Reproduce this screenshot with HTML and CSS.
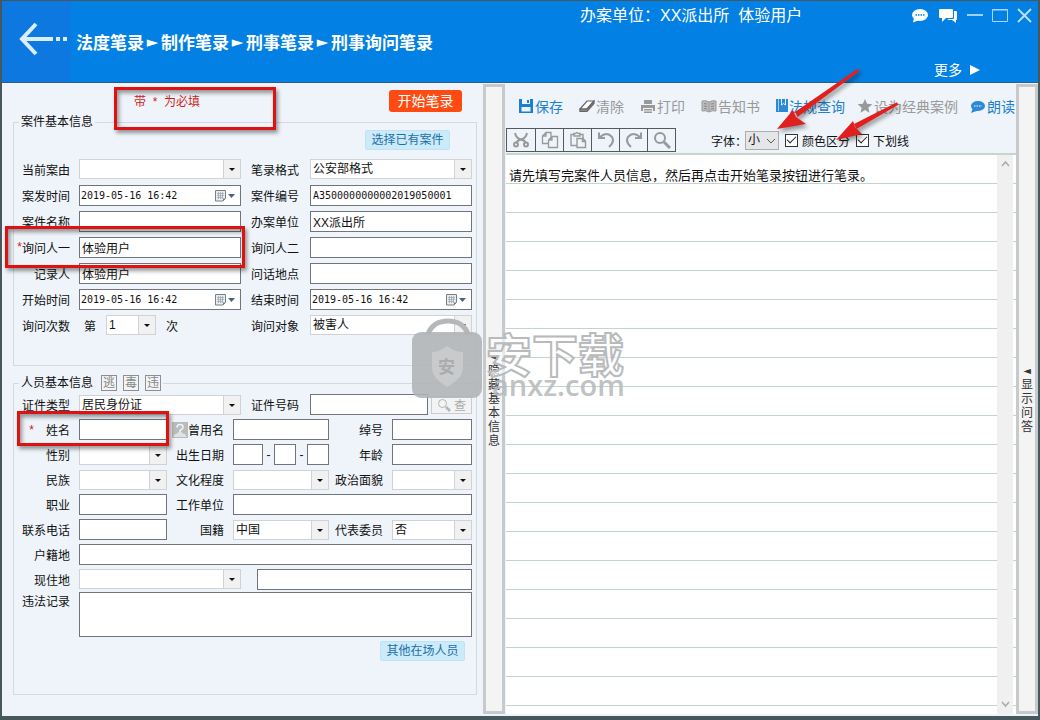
FILE: index.html
```
<!DOCTYPE html>
<html lang="zh-CN">
<head>
<meta charset="utf-8">
<title>刑事询问笔录</title>
<link rel="stylesheet" href="styles.css">
</head>
<body>
<svg class="defs" aria-hidden="true">
  <symbol id="calendar" viewBox="0 0 22 14">
    <path d="M1.500 1.500h10v8l-2.500 2.500H1.500z" fill="#e8ecef" stroke="#777f86"/>
    <path d="M3 4.500h7M3 6.500h7M3 8.500h6M4.500 3v7M6.500 3v7M8.500 3v7" stroke="#9aa5ad" stroke-width=".7"/>
    <path d="M11.500 9.500h-2.500v2.500z" fill="#777f86"/>
    <path d="M14 5h7l-3.500 4z" fill="#4e6579"/>
  </symbol>
</svg>
<div class="window">
  <header class="header">
    <button class="back" type="button" aria-label="返回">
      <svg width="50" height="34" viewBox="0 0 50 34" fill="none" stroke="#d9efff"><path d="M17 2 3 17l14 15" stroke-width="4"/><path d="M4 17h30M37 17h4M44 17h4" stroke-width="4"/></svg>
    </button>
    <nav class="crumbs"><span>法度笔录</span><i>►</i><span>制作笔录</span><i>►</i><span>刑事笔录</span><i>►</i><span>刑事询问笔录</span></nav>
    <div class="header-side">
      <div class="header-top">
        <span class="user">办案单位：XX派出所&nbsp; 体验用户</span>
        <div class="win-buttons">
          <button type="button" aria-label="消息"><svg width="18" height="16" viewBox="0 0 18 16"><ellipse cx="9" cy="7" rx="8" ry="6" fill="#fff"/><path d="M3 10 2 14.500 8 12z" fill="#fff"/><path d="M4.500 7h9" stroke="#0280e3" stroke-width="1.500" stroke-dasharray="1.500 1"/></svg></button>
          <button type="button" aria-label="会话"><svg width="20" height="16" viewBox="0 0 20 16" fill="#fff"><path d="M2 1h12q1 0 1 1v7q0 1-1 1H8l-4 4v-4H2q-1 0-1-1V2q0-1 1-1z"/><path d="M16 3h2q1 0 1 1v7q0 1-1 1v3l-4-3H9l2-1h4q1 0 1-1z"/></svg></button>
          <button type="button" aria-label="最小化"><svg width="16" height="16"><path d="M0 7h16" stroke="#9fd2fb" stroke-width="2"/></svg></button>
          <button type="button" aria-label="最大化"><svg width="16" height="16" fill="none" stroke="#a9d7fb"><path d="M.5 1.500h15v12H.5zM0 2h16"/></svg></button>
          <button type="button" aria-label="关闭"><svg width="15" height="16"><path d="m1 1 13 13M14 1 1 14" stroke="#b9dffc" stroke-width="2"/></svg></button>
        </div>
      </div>
      <button class="more" type="button">更多 <svg width="10" height="10"><path d="M0 0v10l10-5z" fill="#fff"/></svg></button>
    </div>
  </header>

  <main class="main">
    <form class="info">
      <div class="info-top">
        <span class="required-note">带&nbsp; *&nbsp; 为必填</span>
        <button class="start" type="button">开始笔录</button>
      </div>

      <fieldset class="group case">
        <legend>案件基本信息</legend>
        <div class="actions"><button class="soft" type="button">选择已有案件</button></div>
        <div class="row two">
          <label for="cause">当前案由</label>
          <span class="select"><select id="cause"><option></option></select></span>
          <label for="format">笔录格式</label>
          <span class="select"><select id="format"><option>公安部格式</option></select></span>
        </div>
        <div class="row two">
          <label for="ctime">案发时间</label>
          <span class="date"><input id="ctime" value="2019-05-16 16:42"><svg><use href="#calendar"/></svg></span>
          <label for="cno">案件编号</label>
          <input class="code" id="cno" value="A3500000000002019050001">
        </div>
        <div class="row two">
          <label for="cname">案件名称</label><input id="cname">
          <label for="unit">办案单位</label><input id="unit" value="XX派出所">
        </div>
        <div class="row two">
          <label for="asker1"><b>*</b>询问人一</label><input id="asker1" value="体验用户">
          <label for="asker2">询问人二</label><input id="asker2">
        </div>
        <div class="row two">
          <label for="recorder">记录人</label><input id="recorder" value="体验用户">
          <label for="place">问话地点</label><input id="place">
        </div>
        <div class="row two">
          <label for="begin">开始时间</label>
          <span class="date"><input id="begin" value="2019-05-16 16:42"><svg><use href="#calendar"/></svg></span>
          <label for="end">结束时间</label>
          <span class="date"><input id="end" value="2019-05-16 16:42"><svg><use href="#calendar"/></svg></span>
        </div>
        <div class="row two">
          <label for="times">询问次数</label>
          <span class="times">第<span class="select"><select id="times"><option>1</option></select></span>次</span>
          <label for="target">询问对象</label>
          <span class="select"><select id="target"><option>被害人</option></select></span>
        </div>
      </fieldset>

      <fieldset class="group person">
        <legend><span>人员基本信息</span><button class="tag" type="button">逃</button><button class="tag" type="button">毒</button><button class="tag" type="button">违</button></legend>
        <div class="row two">
          <label for="idtype">证件类型</label>
          <span class="select"><select id="idtype"><option>居民身份证</option></select></span>
          <label for="idno">证件号码</label>
          <span class="idno"><input id="idno"><button class="lookup" type="button"><svg width="14" height="14" fill="none" stroke="#b4b4b4"><circle cx="5.500" cy="5.500" r="4"/><path d="m9 9 4 4" stroke-width="2.500"/></svg>查</button></span>
        </div>
        <div class="row three">
          <label for="name"><b class="star">*</b>姓名</label><input id="name">
          <label for="alias"><svg width="16" height="16"><path d="M0 0h16v16H0z" fill="#b9bcbe"/><path d="M1.500 15q0-3 3.500-3.500l1.500-1.500h3l1.500 1.500q3.500.5 3.500 3.500z" fill="#dfe1e2"/><path d="M5 5.500Q5 2.500 8 2.500t3 2.500q0 2-3 3.500v1.500" fill="none" stroke="#f4f4f4" stroke-width="1.500"/></svg>曾用名</label><input id="alias">
          <label for="nick">绰号</label><input id="nick">
        </div>
        <div class="row three">
          <label for="sex">性别</label><span class="select"><select id="sex"><option></option></select></span>
          <label for="year">出生日期</label>
          <span class="birth"><input id="year">-<input aria-label="月">-<input aria-label="日"></span>
          <label for="age">年龄</label><input id="age">
        </div>
        <div class="row three">
          <label for="nation">民族</label><span class="select"><select id="nation"><option></option></select></span>
          <label for="edu">文化程度</label><span class="select"><select id="edu"><option></option></select></span>
          <label for="party">政治面貌</label><span class="select"><select id="party"><option></option></select></span>
        </div>
        <div class="row three">
          <label for="job">职业</label><input id="job">
          <label for="work">工作单位</label><input class="rest" id="work">
        </div>
        <div class="row three">
          <label for="phone">联系电话</label><input id="phone">
          <label for="country">国籍</label><span class="select"><select id="country"><option>中国</option></select></span>
          <label for="deputy">代表委员</label><span class="select"><select id="deputy"><option>否</option></select></span>
        </div>
        <div class="row one"><label for="home">户籍地</label><input id="home"></div>
        <div class="row one">
          <label for="area">现住地</label>
          <span class="address"><span class="select"><select id="area"><option></option></select></span><input aria-label="详细地址"></span>
        </div>
        <div class="row one tall"><label for="record">违法记录</label><textarea id="record"></textarea></div>
        <div class="actions"><button class="soft" type="button">其他在场人员</button></div>
      </fieldset>
    </form>

    <button class="splitter" type="button"><i>◄</i><span>隐藏基本信息</span></button>

    <section class="notes">
      <div class="toolbar">
        <button class="on" type="button"><svg width="16" height="16"><path d="M1 1h14v14H1z" fill="#187fd2"/><path d="M4 1h8v5H4zM3.500 9h9v4.500h-9z" fill="#eef4fa"/><path d="M9 2h2v3H9z" fill="#187fd2"/></svg>保存</button>
        <button type="button"><svg width="16" height="16" fill="#fff" stroke="#666" stroke-width="1.200"><path d="M1 11 8 3h7l-7 8z"/><path d="M1 11v2.500h7l7-8V3l-7 8z" fill="#888"/></svg>清除</button>
        <button type="button"><svg width="16" height="16" fill="#999"><path d="M4 2h8v4H4zM1 7h14v6h-2v-3H3v3H1z"/><path d="M4 11h8v1.500H4zM4 13.500h8V15H4z"/></svg>打印</button>
        <button type="button"><svg width="16" height="16" fill="#bbb" stroke="#999"><path d="M1 3q4-1 7 1 3-2 7-1v10q-4-1-7 1-3-2-7-1zM8 4v10"/><path d="M3 5.500l3 .5M3 8l3 .5M3 10.500l3 .5M10 6l3-.5M10 8.500l3-.5M10 11l3-.5" stroke="#888"/></svg>告知书</button>
        <div class="tools-end">
          <button class="on" type="button"><svg width="12" height="16"><path d="M0 1h12v13H0z" fill="#2c89d6"/><path d="M2.500 1v12" stroke="#9fcdf2"/><path d="M5.500 1v6l2-1.500L9.500 7V1" fill="none" stroke="#e4f1fc"/></svg>法规查询</button>
          <button type="button"><svg width="16" height="16" fill="#999"><path d="m8 1 2.100 4.800 5.200.5-4 3.400 1.200 5.100L8 12.100l-4.500 2.700 1.200-5.100-4-3.400 5.200-.5z"/></svg>设为经典案例</button>
          <button class="on" type="button"><svg width="16" height="16"><ellipse cx="8" cy="8" rx="7" ry="5" fill="#2c89d6"/><path d="M3 10 1 15l7-2.500z" fill="#2c89d6"/><path d="M4 8h8" stroke="#fff" stroke-dasharray="1.500 1"/></svg>朗读</button>
        </div>
      </div>
      <div class="format">
        <div class="edit">
          <button type="button" aria-label="剪切"><svg width="18" height="18" fill="none" stroke="#999" stroke-width="2"><path d="M3 2q1 5 6 6.500T13 12M15 2q-1 5-6 6.500T5 12"/><circle cx="4" cy="13.500" r="2"/><circle cx="14" cy="13.500" r="2"/></svg></button>
          <button type="button" aria-label="复制"><svg width="18" height="18" fill="#eef4f9" stroke="#999" stroke-width="1.300"><path d="M5 1.500h5v11H1.500V5zM5 1.500V5H1.500"/><path d="M11 5.500h5.500v11h-9V9zM11 5.500V9H7.500"/></svg></button>
          <button type="button" aria-label="粘贴"><svg width="18" height="18" fill="#eef4f9" stroke="#999" stroke-width="1.400"><path d="M2 3.500h12v11H2z"/><path d="M5 5V2.500h1.500l1.500-1 1.500 1H11V5z"/><path d="M8 7.500h6l2.500 2.500v6.500H8zM13.500 7.500v3h3"/></svg></button>
          <button type="button" aria-label="撤销"><svg width="18" height="18" fill="none" stroke="#999" stroke-width="2"><path d="M3 6q7-6 12 0 3 5-3 10"/><path d="M2 1.500V7h6"/></svg></button>
          <button type="button" aria-label="重做"><svg width="18" height="18" fill="none" stroke="#999" stroke-width="2"><path d="M15 6Q8 0 3 6q-3 5 3 10"/><path d="M16 1.500V7h-6"/></svg></button>
          <button type="button" aria-label="查找"><svg width="18" height="18" fill="none" stroke="#999" stroke-width="2"><circle cx="7" cy="7" r="5"/><path d="m11 11 6 6" stroke-width="3"/></svg></button>
        </div>
        <label class="font-size">字体：<span class="chevron"><select><option>小</option></select><svg width="10" height="6" fill="none" stroke="#555"><path d="m1 1 4 4 4-4"/></svg></span></label>
        <label class="check"><input type="checkbox" checked>颜色区分</label>
        <label class="check"><input type="checkbox" checked>下划线</label>
      </div>
      <div class="paper">
        <textarea aria-label="笔录内容">请先填写完案件人员信息，然后再点击开始笔录按钮进行笔录。</textarea>
        <div class="scrollbar" aria-hidden="true">
          <svg width="9" height="7" fill="none" stroke="#aaa" stroke-width="1.500"><path d="m1 5 3.500-4L8 5"/></svg>
          <svg width="9" height="7" fill="none" stroke="#aaa" stroke-width="1.500"><path d="m1 1 3.500 4L8 1"/></svg>
        </div>
      </div>
    </section>

    <button class="splitter" type="button"><i>◄</i><span>显示问答</span></button>
  </main>

  <svg class="watermark" width="220" height="90" viewBox="0 0 220 90" aria-hidden="true">
    <path d="M18 19Q23 6 38 6t20 13" fill="none" stroke="#b5b7b9" stroke-width="5"/>
    <rect x="2" y="17" width="70" height="66" rx="9" fill="#b1b3b5" opacity=".88"/>
    <path d="M37 31q8 6 16 6v16q0 10-16 19-15-9-15-19V37q8 0 15-6z" fill="#c8cacc"/>
    <text x="28" y="58" class="mark-shield">安</text>
    <text x="76" y="57" class="mark-cn">安下载</text>
    <text x="82" y="81" class="mark-en">anxz.com</text>
  </svg>
  <div class="callout callout-note"></div>
  <div class="callout callout-asker"></div>
  <div class="callout callout-name"></div>
  <svg class="arrows" width="140" height="90" viewBox="0 0 140 90" aria-hidden="true">
    <g fill="#e01f1f">
      <path d="M98 7.500 35 51l2.500 5L99 10.500q0-3-1-3z"/><path d="m17 68 16-19 3 7 10 7z"/>
      <path d="M136.500 41.500 94 63l2.500 5 41.500-24q0-3-1.500-2.500z"/><path d="m76 79 17-19 2 6 7 7z"/>
    </g>
  </svg>
</div>
</body>
</html>
```
FILE: styles.css
```
* { box-sizing: border-box; }

body {
  margin: 0;
  font-family: "Liberation Sans", "Noto Sans CJK SC", sans-serif;
  font-size: 12px;
  color: #111;
}

button, input, select, textarea { font: inherit; color: inherit; margin: 0; }
button { background: none; border: 0; padding: 0; white-space: nowrap; }
i, b { font-style: normal; font-weight: normal; }
svg { flex: none; }
.defs { display: none; }

.window {
  position: relative;
  display: flex;
  flex-direction: column;
  min-height: 100vh;
  border: solid #47585c;
  border-width: 1px 2px 4px;
  background: #eef4f9;
}

/* Header */
.header {
  display: flex;
  height: 82px;
  background: #0280e3;
  border-bottom: 1px solid #2a5f8c;
  color: #fff;
}
.back { width: 69px; padding-left: 17px; background: #0d78e0; }
.back svg { display: block; margin-bottom: 6px; }
.crumbs {
  display: flex;
  flex: 1;
  align-items: center;
  padding-left: 5px;
  font-size: 17px;
  font-weight: bold;
  white-space: nowrap;
}
.crumbs i { width: 17px; text-align: center; font: 15px "DejaVu Sans", sans-serif; }
.header-side {
  display: flex;
  flex-direction: column;
  justify-content: space-between;
  width: 458px;
  padding-bottom: 2px;
}
.header-top { display: flex; justify-content: space-between; padding: 3px 6px 0 0; }
.user { font-size: 16px; line-height: 24px; }
.win-buttons { display: flex; gap: 9px; align-items: center; }
.win-buttons svg { display: block; }
.more { display: flex; align-items: center; gap: 8px; margin-left: 354px; font-size: 14px; line-height: 20px; }

/* Body columns */
.main { display: flex; flex: 1; }
.info { width: 481px; padding: 0 6px 0 11px; }
.info-top {
  display: flex;
  justify-content: space-between;
  align-items: center;
  height: 31px;
  padding: 4px 15px 0 121px;
}
.required-note { color: #d21c1c; }
.start {
  width: 73px;
  height: 22px;
  border-radius: 3px;
  background: #ff4b12;
  color: #fff;
  font-size: 14px;
  line-height: 20px;
}

.group { min-width: 0; margin: 0; padding: 0 4px 0 0; border: 1px solid #d3d9dd; }
.case { height: 252px; margin-bottom: 8px; }
.person { height: 321px; }
legend { display: flex; align-items: center; margin-left: 5px; padding: 0 2px; line-height: 16px; }
.person legend { height: 18px; gap: 6px; }
.person legend span { margin-right: 2px; }
.tag { width: 16px; height: 16px; border: 1px solid #8f8f8f; color: #888; background: #f2f4f5; line-height: 13px; }
.actions { display: flex; justify-content: flex-end; padding-right: 7px; }
.case .actions { padding-right: 22px; margin-bottom: 6px; }
.person .actions { margin-top: 3px; }
.soft { width: 85px; height: 20px; border: 1px solid #bfe3f6; border-radius: 2px; background: #cbebfb; color: #1f6ea6; line-height: 17px; }

/* Form rows */
.row { display: grid; column-gap: 9px; align-items: center; height: 26px; }
.person .row { height: 25px; }
.two { grid-template-columns: 56px 1fr 51px 1fr; }
.three { grid-template-columns: 56px 88fr 48px 96fr 45px 80fr; }
.one { grid-template-columns: 56px 1fr; }
.person .tall { height: 46px; align-items: start; }
.rest { grid-column: 4 / -1; }
.row label { display: flex; align-items: center; justify-content: flex-end; white-space: nowrap; }
.two label:nth-of-type(2) { padding-right: 2px; }
.row label b { color: #d21c1c; }
.row .star { margin-right: 12px; }

.row input, .row textarea {
  display: block;
  width: 100%;
  min-width: 0;
  height: 21px;
  padding: 0 2px;
  border: 1px solid #6f757a;
  border-radius: 0;
  background: #fff;
}
.row textarea { height: 45px; resize: none; }
.date { position: relative; }
.row .date input, .row .code { font: 10px "DejaVu Sans Mono", monospace; padding-left: 1px; }
.row .code { padding-left: 2px; }
.date svg { position: absolute; right: 5px; top: 4px; width: 22px; height: 14px; }

.select { position: relative; display: block; min-width: 0; }
.select select {
  display: block;
  appearance: none;
  width: 100%;
  height: 20px;
  padding: 0 18px 0 2px;
  border: 1px solid #cfd3d6;
  border-radius: 0;
  background: linear-gradient(90deg, #cfd3d6 1px, #f1f1f1 1px) right / 17px 100% no-repeat #fff;
}
.select::after {
  content: "";
  position: absolute;
  right: 6px;
  top: 9px;
  border: solid transparent;
  border-width: 3px 3px 0;
  border-top-color: #111;
}
.times { display: flex; align-items: center; gap: 10px; padding-left: 5px; }
.times .select { width: 50px; }
.idno { display: flex; align-items: center; gap: 3px; }
.lookup { display: flex; flex: none; align-items: center; justify-content: center; gap: 3px; width: 41px; height: 18px; border: 1px solid #ccc; background: #f2f3f4; color: #aaa; }
.birth { display: flex; align-items: center; justify-content: space-between; }
.birth input { flex: 0 1 22px; }
.birth input:first-child { flex-basis: 30px; }
.address { display: grid; grid-template-columns: 162fr 215fr; gap: 16px; }

/* Vertical bars */
.splitter {
  display: flex;
  flex-direction: column;
  align-items: center;
  justify-content: center;
  flex: none;
  width: 22px;
  margin: 1px 0 2px;
  border: 3px solid #c7cacc;
  background: #f4f4f5;
  color: #333;
}
.splitter i { font: 10px/14px "DejaVu Sans", sans-serif; }
.splitter span { width: 12px; line-height: 14px; white-space: normal; word-break: break-all; }

/* Record editor */
.notes { display: flex; flex: 1; flex-direction: column; min-width: 0; }
.toolbar { display: flex; gap: 16px; height: 45px; padding: 0 0 0 13px; overflow: hidden; color: #999; }
.toolbar button { display: flex; flex: none; align-items: center; gap: 1px; font-size: 14px; }
.toolbar .on { color: #2180cf; }
.tools-end { display: flex; gap: 12px; }
.format { display: flex; align-items: center; height: 24px; padding-left: 1px; white-space: nowrap; }
.edit { display: flex; margin-right: 35px; border: 1px solid #53595d; }
.edit button { display: grid; place-items: center; width: 28px; height: 22px; }
.edit button + button { border-left: 1px solid #53595d; }
.font-size { display: flex; align-items: center; margin-right: 6px; }
.chevron { position: relative; margin-left: -2px; }
.chevron select { display: block; appearance: none; width: 34px; height: 19px; padding: 0 2px; border: 1px solid #adadad; border-radius: 0; background: #e5e6e7; }
.chevron svg { position: absolute; right: 3px; top: 7px; }
.check { display: flex; align-items: center; gap: 4px; margin-right: 6px; }
.check input {
  appearance: none;
  display: grid;
  place-items: center;
  width: 13px;
  height: 13px;
  border: 1px solid #333;
  background: #fff;
}
.check input:checked::after { content: ""; width: 8px; height: 4px; border: solid #222; border-width: 0 0 1px 1px; transform: rotate(-45deg); margin-bottom: 3px; }

.paper {
  display: flex;
  flex: 1;
  margin: 1px 0 2px 1px;
  padding-right: 3px;
  border-top: 2px solid #c5d6ca;
  background: repeating-linear-gradient(#fff 0 28px, #c3d5c7 28px 29px);
}
.paper textarea {
  flex: 1;
  min-width: 0;
  padding: 6px 3px 0;
  border: 0;
  background: none;
  font-size: 13px;
  line-height: 29px;
  resize: none;
  overflow: hidden;
}
.scrollbar { display: flex; flex-direction: column; align-items: center; justify-content: space-between; width: 16px; padding: 6px 0; background: #f0f0f0; }

/* Overlays */
.watermark { position: absolute; left: 408px; top: 314px; }
.mark-shield { font-size: 17px; font-weight: bold; fill: #aaacae; }
.mark-cn { font-size: 46px; font-weight: bold; fill: #fff; fill-opacity: .6; stroke: #b8babb; stroke-width: 2px; }
.mark-en { font-family: "Open Sans", sans-serif; font-size: 29px; font-weight: 600; fill: #b8babb; fill-opacity: .9; }
.callout {
  position: absolute;
  border: 3px solid #df1212;
  box-shadow: 2px 3px 4px rgba(0, 0, 0, .4), inset 2px 3px 4px rgba(0, 0, 0, .4);
}
.callout-note { left: 112px; top: 86px; width: 162px; height: 43px; }
.callout-asker { left: 3px; top: 225px; width: 240px; height: 42px; }
.callout-name { left: 15px; top: 410px; width: 152px; height: 35px; }
.arrows { position: absolute; left: 758px; top: 60px; filter: drop-shadow(2px 3px 2px rgba(0, 0, 0, .4)); }
.callout, .arrows, .watermark { pointer-events: none; }
```
